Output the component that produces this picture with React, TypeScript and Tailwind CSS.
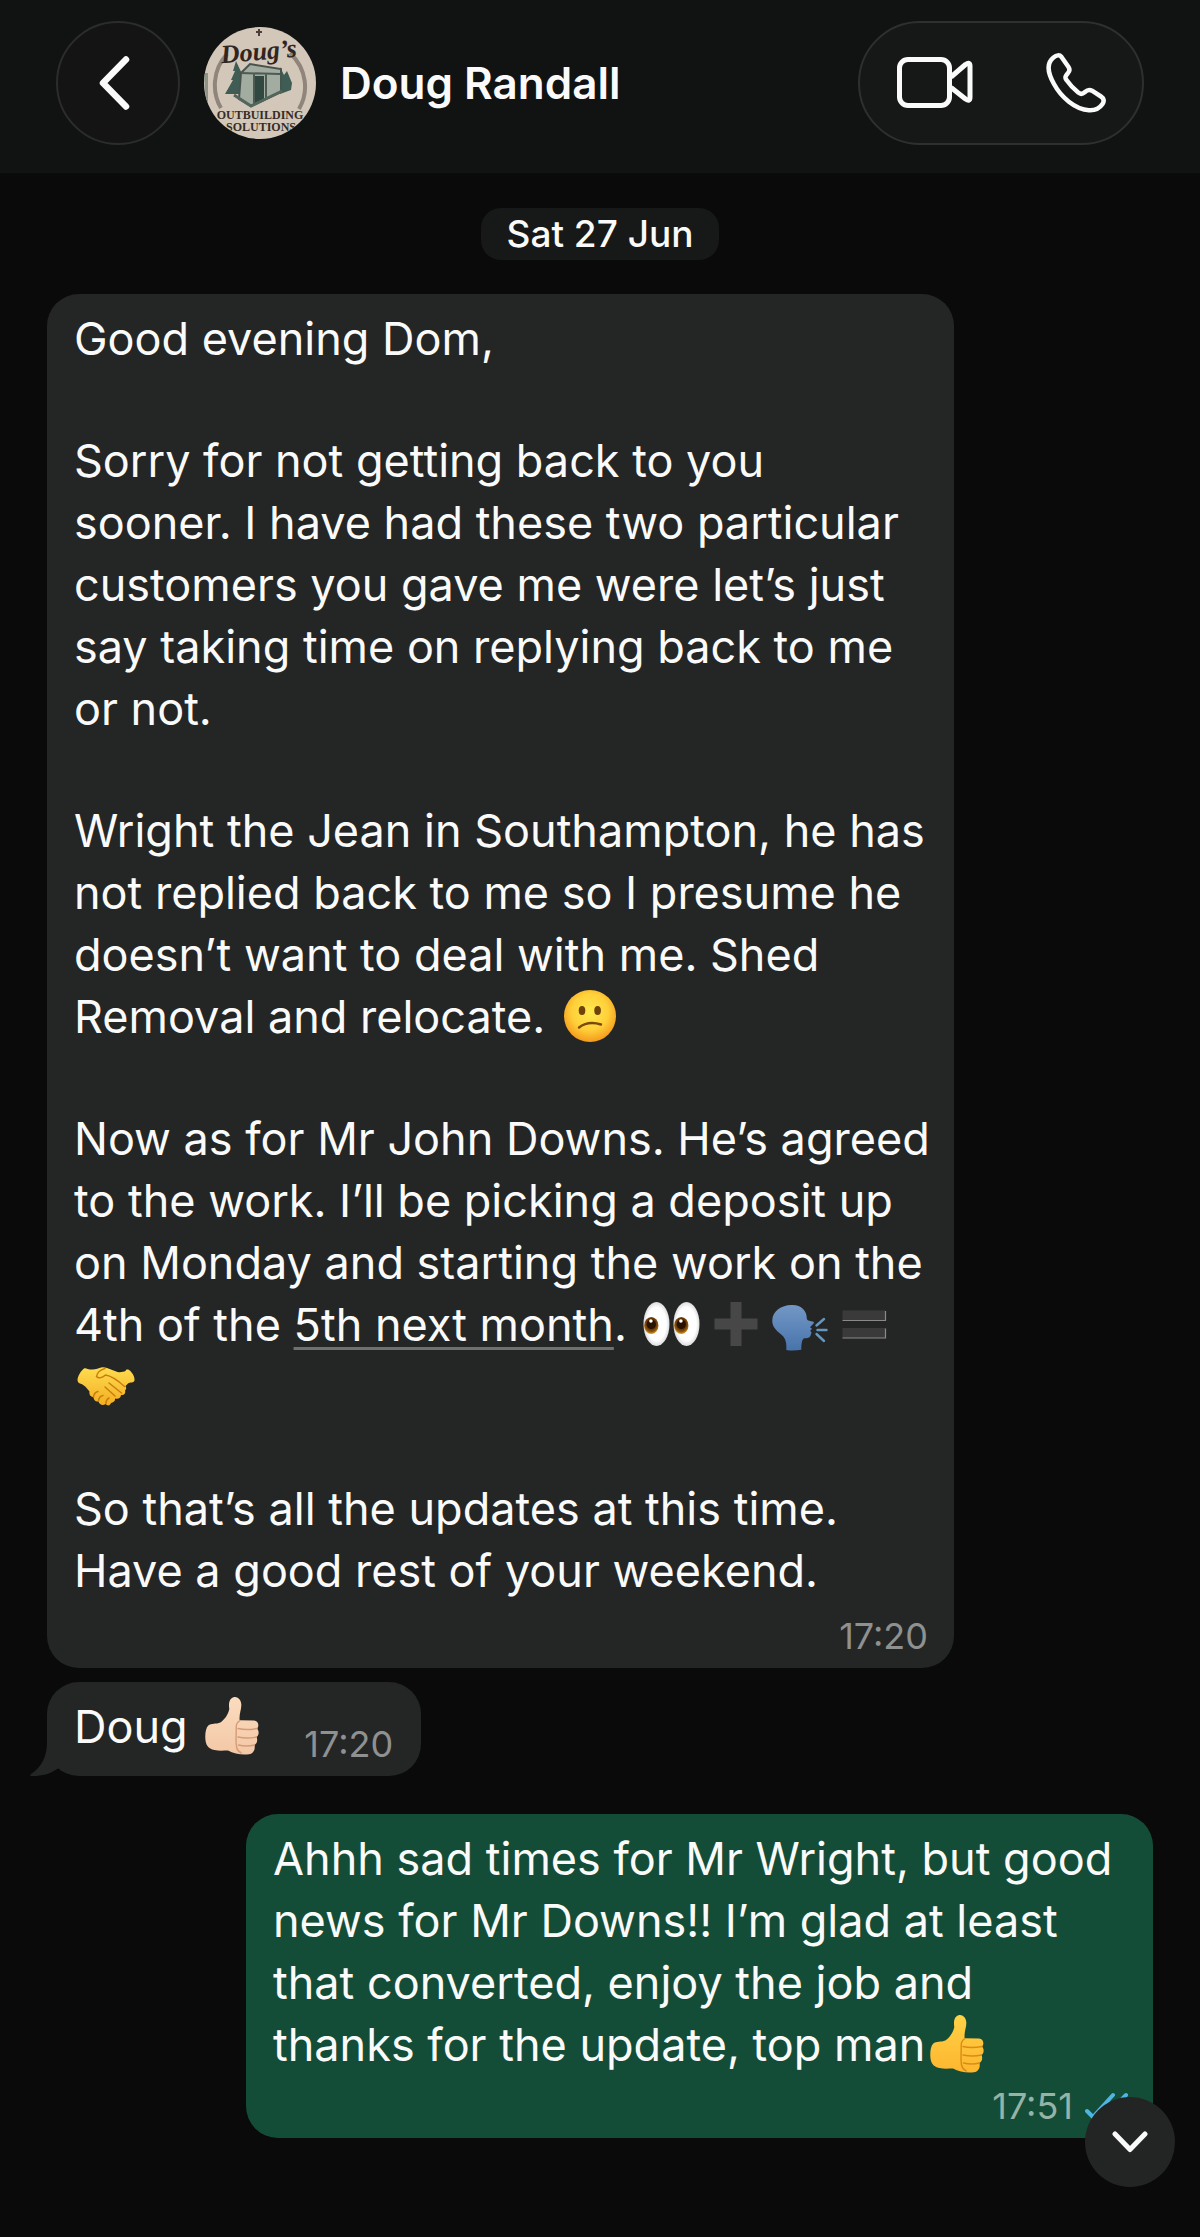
import type { ReactNode } from 'react';

interface IconProps {
  className?: string;
}

interface EmojiProps {
  label: string;
  children: ReactNode;
}

function Emoji({ label, children }: EmojiProps) {
  return (
    <svg
      role="img"
      aria-label={label}
      viewBox="0 0 56 56"
      className="inline-block w-14 h-14 mx-1 -my-2 align-[-3px] overflow-visible"
    >
      {children}
    </svg>
  );
}

function ConfusedFace() {
  return (
    <Emoji label="confused face">
      <defs>
        <radialGradient id="face" cx="0.5" cy="0.42" r="0.58">
          <stop offset="0" stopColor="#ffe94e" />
          <stop offset="0.6" stopColor="#ffd03a" />
          <stop offset="1" stopColor="#f59a1c" />
        </radialGradient>
      </defs>
      <circle cx="28" cy="28" r="26" fill="url(#face)" />
      <ellipse cx="20" cy="22.5" rx="3.3" ry="4.5" fill="#6e4208" />
      <ellipse cx="35.6" cy="22.5" rx="3.3" ry="4.5" fill="#6e4208" />
      <path d="M17 39.5Q26 32.5 39 36.5" fill="none" stroke="#7b4a0a" strokeWidth="2.4" strokeLinecap="round" />
    </Emoji>
  );
}

function Eyes() {
  return (
    <Emoji label="eyes">
      <defs>
        <radialGradient id="white" cx="0.5" cy="0.5" r="0.5">
          <stop offset="0.75" stopColor="#ffffff" />
          <stop offset="1" stopColor="#dcdcdc" />
        </radialGradient>
        <radialGradient id="iris" cx="0.5" cy="0.4" r="0.6">
          <stop offset="0.4" stopColor="#4a2403" />
          <stop offset="0.75" stopColor="#8a5210" />
          <stop offset="1" stopColor="#e0a526" />
        </radialGradient>
      </defs>
      {[12.5, 42.5].map((x) => (
        <g key={x}>
          <ellipse cx={x} cy="28" rx="13" ry="22" fill="url(#white)" />
          <ellipse cx={x - 5.2} cy="29.5" rx="7.2" ry="8.6" fill="url(#iris)" />
          <circle cx={x - 5.2} cy="28.5" r="4.6" fill="#2a1200" />
          <circle cx={x - 5.6} cy="25" r="1.8" fill="#ffffff" />
        </g>
      ))}
    </Emoji>
  );
}

function Plus() {
  return (
    <Emoji label="plus">
      <path d="M22.5 6h11v16.500h16v11h-16V50h-11V33.500h-16v-11h16z" fill="#474747" />
    </Emoji>
  );
}

function SpeakingHead() {
  return (
    <Emoji label="speaking head">
      <defs>
        <linearGradient id="head" x1="0" y1="0" x2="0" y2="1">
          <stop offset="0" stopColor="#7398c6" />
          <stop offset="1" stopColor="#4873ab" />
        </linearGradient>
      </defs>
      <path
        d="M19.500 9C29 8.500 35 15 34.800 22.500c.2 1.200 1 1.800 2.500 2.300l4 .9c.8.4.8 1.200.2 1.900l-3.500 3.600 2 1.500-1.800 2 1.300 1.800-1 3.200c-.7 2-3 2.500-6.500 2.600-2 1.500-2.700 5-2.700 11.500-5 1-11 1-15 .2.5-6-.5-11.500-4-14.500C3 33.500 0 30 .3 24 .7 15 9 9.300 19.500 9z"
        fill="url(#head)"
      />
      <path d="M44.500 29.500L52 23M45.500 34h9M44.500 38l7.500 7" fill="none" stroke="#6796bd" strokeWidth="2.4" strokeLinecap="round" />
    </Emoji>
  );
}

function Equals() {
  return (
    <Emoji label="equals">
      <path d="M6.500 14.500h43v10h-43zM6.500 32h43v10h-43z" fill="#3a3a3a" />
      <path d="M6.500 24.500h43v-9.500M6.500 42h43v-9.500" fill="none" stroke="#8a8a8a" strokeWidth="1.200" />
    </Emoji>
  );
}

function Handshake() {
  return (
    <Emoji label="handshake">
      <defs>
        <linearGradient id="shake" x1="0" y1="0" x2="0" y2="1">
          <stop offset="0" stopColor="#ffdc4f" />
          <stop offset="1" stopColor="#f3ae23" />
        </linearGradient>
      </defs>
      <path
        d="M6 10.500c-3 2-6.500 8-6.500 11.500 0 1.500 1 3 2.500 3.500 3 1 5 2.500 7 5l2.500 3c-.5 3 1 5.500 4 5.500 0 3 2 5 5 4.500 1 3.500 4.500 4.500 7 2.500 2 2 4.500 2 5.500-1 3-.5 4.500-2.500 4-4.500 3 1 6-.5 6-3.500 3 .5 5-2 4-4.500 1.500-1 1.500-3 .5-4.500l2.500-2.500c2-1.500 6-.5 6.500-3 .5-4-2.500-8.500-5.500-10.500-1.500-.8-3-.5-3.500 1-2 1-5 1.500-8 1L29 10c-3-1-5.500-1-7.500 0-3 1.500-6 1.500-9.500 1.500-2 0-4-2-6-1z"
        fill="url(#shake)"
      />
      <path
        d="M27 10.500c-4 1-8 4-8.500 8 2 2.500 6.500 1 9-1.500 7 1 13 6 19 11.500M31 25l12.500 10M27 29l10 9M15.500 39c.5-3.500 2.500-5 4.500-5.500M20.500 43c.3-3 2-5 4.500-5.500M28 45.500c0-2.500 1-4.500 3-5.500"
        fill="none"
        stroke="#c97e0c"
        strokeWidth="1.500"
        strokeLinecap="round"
      />
    </Emoji>
  );
}

interface ThumbsUpProps {
  id: string;
  from: string;
  to: string;
  line: string;
}

function ThumbsUp({ id, from, to, line }: ThumbsUpProps) {
  return (
    <Emoji label="thumbs up">
      <defs>
        <linearGradient id={id} x1="0" y1="0" x2="0" y2="1">
          <stop offset="0" stopColor={from} />
          <stop offset="1" stopColor={to} />
        </linearGradient>
      </defs>
      <path
        d="M29.500-.8c3.500-1.200 7.500 2 7.800 7 .3 5.500-2.300 9-1.700 16L50 22.500c4.500.3 5.500 5.500 3 8 2.500 2.500 2 7-.5 8.500 1.500 3 .5 6.500-2 8 1 4.500-1 8.500-5.500 9.300-7 1-15-.5-21-3.800-4 0-8.500.8-13.500-.5C4 51 1.500 46.500 1.300 40c-.2-5 .5-10 3-12.500 3-2.500 8-1.200 12-3 4-2.500 8-8 9-13.500-.8-4.500-.3-10.500 4.200-11.800z"
        fill={`url(#${id})`}
      />
      <path
        d="M36 22.500c-2.500 1.500-4 3.500-3.800 7 .3 7-1 14 .5 20 .5 2.500 2.500 4.500 4.500 5.500M34 30.500c6 1.500 13 1.200 19 0M34 39c6 1.200 13 1.200 18.500 0M34.500 47c5 1.200 11 1.200 16 0"
        fill="none"
        stroke={line}
        strokeWidth="1.400"
        strokeLinecap="round"
      />
    </Emoji>
  );
}

function BackIcon({ className }: IconProps) {
  return (
    <svg viewBox="0 0 32 54" fill="none" stroke="currentColor" strokeWidth="6.500" strokeLinecap="round" strokeLinejoin="round" className={className}>
      <path d="M28 3.500L5 27l23 23.500" />
    </svg>
  );
}

function VideoIcon({ className }: IconProps) {
  return (
    <svg viewBox="0 0 76 52" fill="none" stroke="currentColor" strokeWidth="5" strokeLinejoin="round" className={className}>
      <rect x="2.500" y="2.500" width="50" height="46" rx="8.500" />
      <path d="M54 20L68.500 7.500Q73 4.500 73 9v31.500Q73 45 68.500 42L54 30.500" />
    </svg>
  );
}

function PhoneIcon({ className }: IconProps) {
  return (
    <svg viewBox="0 0 60 60" fill="none" stroke="currentColor" strokeWidth="4.500" strokeLinejoin="round" className={className}>
      <path d="M7.500 4.500C10.500 2 13.500 1.500 15.500 4l7 10c1.500 2.500 1.500 4-.5 6-2.500 3-3.500 4.500-1.500 7C24 32 28.500 36.500 32.500 39.700c2 1.800 4 1.500 6.500-.7 2.500-2.300 4.500-2.700 7-1.300l9 5.800c3 2 3.500 4.500 1.500 7.500-3 4.500-7.500 6.500-13.500 6.200C29 56.500 15 44 8 31 1.500 19.500.5 10 7.500 4.500z" />
    </svg>
  );
}

function Avatar() {
  return (
    <svg role="img" aria-label="Doug's Outbuilding Solutions" viewBox="0 0 112 112" className="w-28 h-28 shrink-0 rounded-full">
      <rect width="112" height="112" fill="#d2c7b8" />
      <path d="M0 46h4v30H2z" fill="#8d9488" />
      <path d="M55 2v7M52 5h6" stroke="#4b4039" strokeWidth="2" />
      <path d="M23 27C8 43 8 66 17 81M86 26c17 16 19 39 9 56" fill="none" stroke="#8f857a" strokeWidth="4" />
      <text x="55" y="33" textAnchor="middle" transform="rotate(-5 55 28)" fontSize="26" className="font-['Liberation_Serif',serif] font-bold italic" fill="#30251f">
        Doug’s
      </text>
      <path d="M32 34l-3 10 2 0-4 9 2 0-8 14h18V49zM76 40l4 8 3-4 5 12-1 7-11 4z" fill="#3f5d55" />
      <path d="M37 46l9-9 31 5 0 23-30 14-12-7z" fill="#a3aca1" stroke="#47544e" strokeWidth="2" />
      <path d="M37 46l39 1M50 47v30M62 47v25" stroke="#4c5b54" strokeWidth="2" />
      <path d="M51 49h9v25l-9 4z" fill="#304841" />
      <path d="M30 68l17 11 31-15" fill="none" stroke="#52665c" strokeWidth="3" />
      <text x="56" y="92" textAnchor="middle" fontSize="12" className="font-['Liberation_Serif',serif] font-bold" fill="#362c26">
        OUTBUILDING
      </text>
      <text x="57" y="104" textAnchor="middle" fontSize="12" className="font-['Liberation_Serif',serif] font-bold" fill="#362c26">
        SOLUTIONS
      </text>
    </svg>
  );
}

function ChatHeader() {
  return (
    <header className="flex items-center h-[173px] pb-2 px-14 bg-[#111313]">
      <button
        aria-label="Back"
        className="flex items-center justify-center w-[124px] h-[124px] pr-2 rounded-full border-2 border-[#2b2c2c] bg-[#141414]"
      >
        <BackIcon className="w-8 h-[54px]" />
      </button>
      <div className="flex items-center gap-6 ml-6">
        <Avatar />
        <h1 className="text-[44px] leading-[62px] font-semibold">Doug Randall</h1>
      </div>
      <div className="flex items-center justify-between w-[286px] h-[124px] pl-[37px] pr-9 ml-auto rounded-full border-2 border-[#2d302f] bg-[#161818]">
        <button aria-label="Video call">
          <VideoIcon className="w-[76px] h-[52px]" />
        </button>
        <button aria-label="Voice call">
          <PhoneIcon className="w-[60px] h-[60px]" />
        </button>
      </div>
    </header>
  );
}

export default function App() {
  return (
    <div className="relative min-h-screen bg-[#0a0a0a] text-[#fafafa] font-['Inter',sans-serif]">
      <ChatHeader />

      <main className="flex flex-col px-[47px] pt-[35px] pb-24">
        <div className="self-center px-[26px] rounded-[20px] bg-[#171818] text-[37px] leading-[52px] font-medium">
          Sat 27 Jun
        </div>

        <article className="self-start max-w-[907px] mt-[34px] pl-[27px] pr-6 pt-[14px] pb-[10px] rounded-[32px] bg-[#242626]">
          <div className="flex flex-col gap-[60px] text-[45px] leading-[62px]">
            <p>Good evening Dom,</p>
            <p>
              Sorry for not getting back to you sooner. I have had these two particular customers you gave me were
              let’s just say taking time on replying back to me or not.
            </p>
            <p>
              Wright the Jean in Southampton, he has not replied back to me so I presume he doesn’t want to deal with
              me. Shed Removal and relocate. <ConfusedFace />
            </p>
            <p>
              Now as for Mr John Downs. He’s agreed to the work. I’ll be picking a deposit up on Monday and starting
              the work on the 4th of the{' '}
              <a href="#date" className="underline decoration-[#6f7171] decoration-[3px] underline-offset-[6px]">
                5th next month
              </a>
              . <Eyes />
              <Plus />
              <SpeakingHead />
              <Equals />
              <Handshake />
            </p>
            <p>So that’s all the updates at this time. Have a good rest of your weekend.</p>
          </div>
          <time className="block mt-3 pr-[2px] text-right text-[36px] leading-[44px] text-[#8f9191]">17:20</time>
        </article>

        <article className="relative self-start flex items-end mt-[14px] pl-[27px] pr-7 pt-[14px] pb-[10px] rounded-[32px] bg-[#242626]">
          <svg viewBox="0 0 40 50" aria-hidden="true" className="absolute -left-[17px] bottom-0 w-10 h-[50px]">
            <path d="M17 0v16C17 30 12 41 1 48c-1.500 1.500-.5 2 2 2 9 0 17-2 24-7l13-5V0z" fill="#242626" />
          </svg>
          <p className="relative pb-2 text-[45px] leading-[62px]">
            Doug <ThumbsUp id="thumb-light" from="#fbdcbf" to="#f3c8a6" line="#d49c78" />
          </p>
          <time className="ml-10 text-[36px] leading-[44px] text-[#8f9191]">17:20</time>
        </article>

        <article className="self-end max-w-[907px] mt-[38px] pl-[27px] pr-6 pt-[14px] pb-[10px] rounded-[32px] bg-[#144d37]">
          <p className="pr-2 text-[45px] leading-[62px]">
            Ahhh sad times for Mr Wright, but good news for Mr Downs!! I’m glad at least that converted, enjoy the job
            and thanks for the update, top man
            <ThumbsUp id="thumb-yellow" from="#ffd246" to="#fdb62f" line="#d98c14" />
          </p>
          <div className="flex items-center justify-end gap-3 mt-2">
            <time className="text-[36px] leading-[44px] text-[#95b3a6]">17:51</time>
            <svg viewBox="0 0 44 28" fill="none" stroke="#4fb6e3" strokeWidth="4" strokeLinecap="round" role="img" aria-label="Read" className="w-11 h-7">
              <path d="M2 19l6 6L28 3M20 25L41 3" />
            </svg>
          </div>
        </article>
      </main>

      <button
        aria-label="Scroll to latest"
        className="absolute right-[25px] bottom-[50px] flex items-center justify-center w-[90px] h-[90px] rounded-full bg-[#232525]"
      >
        <svg viewBox="0 0 36 22" fill="none" stroke="currentColor" strokeWidth="5" strokeLinecap="round" strokeLinejoin="round" className="w-9 h-[22px]">
          <path d="M3 3l15 15.500L33 3" />
        </svg>
      </button>
    </div>
  );
}
